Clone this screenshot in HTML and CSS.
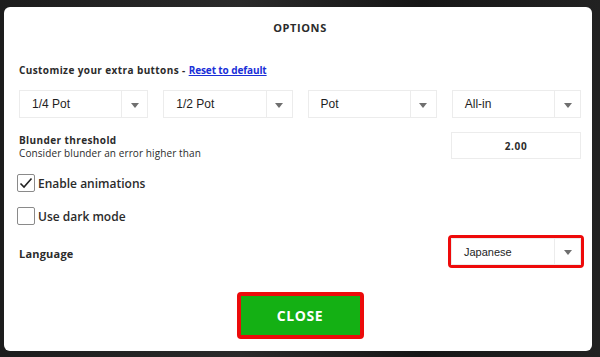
FILE: index.html
```html
<!DOCTYPE html>
<html lang="en">
<head>
    <meta charset="UTF-8">
    <meta name="viewport" content="width=device-width, initial-scale=1.0">
    <title>Options</title>
    <link rel="stylesheet" href="styles.css">
</head>
<body>
    <div class="modal">
        <h2 class="title">OPTIONS</h2>

        <div class="extra-label">Customize your extra buttons - <a href="#" class="reset">Reset to default</a></div>

        <div class="pot-row">
            <div class="select"><span class="select-text">1/4 Pot</span><span class="select-arrow"></span></div>
            <div class="select"><span class="select-text">1/2 Pot</span><span class="select-arrow"></span></div>
            <div class="select"><span class="select-text">Pot</span><span class="select-arrow"></span></div>
            <div class="select"><span class="select-text">All-in</span><span class="select-arrow"></span></div>
        </div>

        <div class="threshold">
            <div class="threshold-label">
                <div class="label-bold">Blunder threshold</div>
                <div class="label-sub">Consider blunder an error higher than</div>
            </div>
            <div class="number-input">2.00</div>
        </div>

        <label class="check first">
            <span class="box">
                <svg width="14" height="12" viewBox="0 0 14 12"><path d="M1.5 6.5 L5 10 L12.5 1.5" fill="none" stroke="#222" stroke-width="1.6"/></svg>
            </span>
            Enable animations
        </label>

        <label class="check second">
            <span class="box"></span>
            Use dark mode
        </label>

        <div class="language">
            <div class="label-bold">Language</div>
            <div class="highlight">
                <div class="select lang-select"><span class="select-text">Japanese</span><span class="select-arrow"></span></div>
            </div>
        </div>

        <div class="actions">
            <button class="close-button">CLOSE</button>
        </div>
    </div>
</body>
</html>
```

FILE: styles.css
```css
/* 背景（テーブルが暗く見えている部分） */
body {
    margin: 0;
    height: 357px;
    padding: 7px 8px 0 4px;
    box-sizing: border-box;
    overflow: hidden;
    background: linear-gradient(90deg, #1c1c1c 0%, #2a2a2a 40%, #161616 70%, #222 100%);
    font-family: "Open Sans", "Liberation Sans", sans-serif;
    color: #2b2b2b;
}

/* モーダル本体 */
.modal {
    width: 588px;
    height: 344px;
    background-color: #fff;
    border-radius: 6px;
    padding: 0 11px 0 15px;
    box-sizing: border-box;
    display: flex;
    flex-direction: column;
}

.title {
    margin: 14px 0 0;
    font-size: 11px;
    line-height: 14px;
    font-weight: 700;
    letter-spacing: 0.6px;
    text-align: center;
}

.extra-label {
    margin-top: 28px;
    font-size: 10px;
    line-height: 14px;
    font-weight: 700;
    letter-spacing: 0.4px;
}

.reset {
    color: #1a2fd8;
    text-decoration: underline;
    letter-spacing: -0.1px;
}

/* セレクト風ボックス */
.pot-row {
    margin-top: 13px;
    display: grid;
    grid-template-columns: repeat(4, 1fr);
    gap: 15px;
}

.select {
    height: 28px;
    border: 1px solid #ececec;
    box-sizing: border-box;
    display: flex;
    font-family: "Liberation Sans", Arial, sans-serif;
    font-size: 12px;
    color: #1e1e1e;
}

.select-text {
    flex: 1;
    display: flex;
    align-items: center;
    padding-left: 12px;
}

.select-arrow {
    width: 25px;
    border-left: 1px solid #ececec;
    display: flex;
    align-items: center;
    justify-content: center;
}

.select-arrow::after {
    content: "";
    border-left: 4px solid transparent;
    border-right: 4px solid transparent;
    border-top: 5px solid #6f6f6f;
    margin-top: 2px;
}

/* しきい値 */
.threshold {
    margin-top: 14px;
    display: flex;
    justify-content: space-between;
    align-items: flex-start;
}

.threshold-label {
    margin-top: 2px;
}

.label-bold {
    font-size: 10px;
    line-height: 13px;
    font-weight: 700;
    letter-spacing: 0.4px;
}

.label-sub {
    font-size: 10px;
    line-height: 13px;
    letter-spacing: 0.1px;
}

.number-input {
    width: 130px;
    height: 27px;
    border: 1px solid #ececec;
    box-sizing: border-box;
    display: flex;
    align-items: center;
    justify-content: center;
    font-size: 10px;
    font-weight: 700;
    letter-spacing: 0.6px;
}

/* チェックボックス */
.check {
    display: flex;
    align-items: center;
    gap: 3px;
    height: 18px;
    margin-left: -2px;
    font-size: 12px;
    font-weight: 600;
}

.check.first {
    margin-top: 14px;
}

.check.second {
    margin-top: 15px;
}

.box {
    width: 18px;
    height: 18px;
    border: 1px solid #8a8a8a;
    border-radius: 2px;
    box-sizing: border-box;
    display: flex;
    align-items: center;
    justify-content: center;
}

/* 言語 */
.language {
    margin-top: 10px;
    display: flex;
    justify-content: space-between;
    align-items: center;
}

.language .label-bold {
    font-size: 11px;
    letter-spacing: 0.2px;
    margin-top: 3px;
}

.highlight {
    border: 3px solid #ee0a0a;
    border-radius: 4px;
    margin-right: -3px;
}

.lang-select {
    width: 130px;
    height: 27px;
    font-size: 11px;
}

/* 閉じるボタン */
.actions {
    margin-top: 24px;
    display: flex;
    justify-content: center;
}

.close-button {
    width: 127px;
    height: 47px;
    border: 4px solid #ec0b0b;
    border-radius: 4px;
    background-color: #14b014;
    color: #fff;
    font-family: "Open Sans", "Liberation Sans", sans-serif;
    font-size: 14px;
    font-weight: 700;
    letter-spacing: 0.6px;
    cursor: pointer;
}
```
